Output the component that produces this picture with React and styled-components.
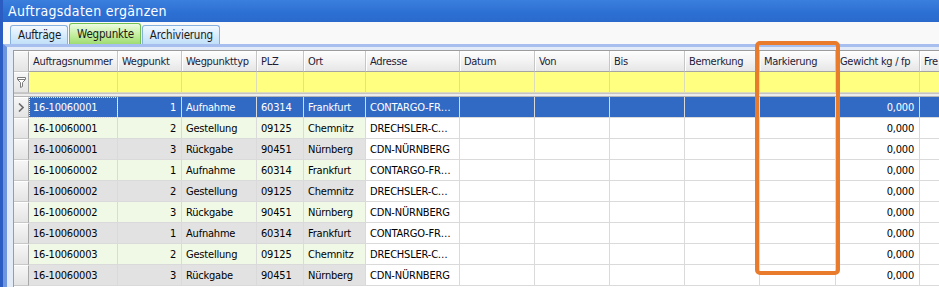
import React from 'react';
import styled, { createGlobalStyle, css } from 'styled-components';

const GlobalStyle = createGlobalStyle`
  html, body {
    margin: 0;
    padding: 0;
    background: #ffffff;
    overflow: hidden;
  }
`;

const columns = [
  { key: 'nr', title: 'Auftragsnummer', width: 89, tinted: true },
  { key: 'wp', title: 'Wegpunkt', width: 64, tinted: true, right: true },
  { key: 'typ', title: 'Wegpunkttyp', width: 75, tinted: true },
  { key: 'plz', title: 'PLZ', width: 47, tinted: true },
  { key: 'ort', title: 'Ort', width: 62, tinted: true },
  { key: 'adr', title: 'Adresse', width: 94 },
  { key: 'datum', title: 'Datum', width: 75 },
  { key: 'von', title: 'Von', width: 75 },
  { key: 'bis', title: 'Bis', width: 75 },
  { key: 'bem', title: 'Bemerkung', width: 75 },
  { key: 'mark', title: 'Markierung', width: 76 },
  { key: 'gew', title: 'Gewicht kg / fp', width: 84, right: true },
  { key: 'fre', title: 'Fre', width: 90 },
];

const stops = [
  ['1', 'Aufnahme', '60314', 'Frankfurt', 'CONTARGO-FR…'],
  ['2', 'Gestellung', '09125', 'Chemnitz', 'DRECHSLER-C…'],
  ['3', 'Rückgabe', '90451', 'Nürnberg', 'CDN-NÜRNBERG'],
];

const rows = ['16-10060001', '16-10060002', '16-10060003'].flatMap((nr) =>
  stops.map(([wp, typ, plz, ort, adr]) => ({
    nr, wp, typ, plz, ort, adr,
    datum: '', von: '', bis: '', bem: '', mark: '', gew: '0,000', fre: '',
  }))
);

const tabs = [
  { label: 'Aufträge', active: false },
  { label: 'Wegpunkte', active: true },
  { label: 'Archivierung', active: false },
];

const App = () => (
  <Frame>
    <GlobalStyle />
    <Window>
      <TitleBar>Auftragsdaten ergänzen</TitleBar>
      <TabStrip>
        {tabs.map((t) => (
          <Tab key={t.label} $active={t.active}>{t.label}</Tab>
        ))}
      </TabStrip>
      <Panel>
        <Grid>
          <HeaderRow>
            <SelectorCell $header />
            {columns.map((c) => (
              <HeaderCell key={c.key} $width={c.width}>{c.title}</HeaderCell>
            ))}
          </HeaderRow>
          <FilterRow>
            <SelectorCell>
              <svg width="9" height="11" viewBox="0 0 9 11">
                <path d="M0.5 0.5 H8.5 V2.5 L5.5 5.5 V9.5 L3.5 10.5 V5.5 L0.5 2.5 Z" fill="#ffffff" stroke="#7a7a7a" />
                <path d="M1 2.5 H8" stroke="#7a7a7a" />
              </svg>
            </SelectorCell>
            {columns.map((c) => (
              <FilterCell key={c.key} $width={c.width} />
            ))}
          </FilterRow>
          <Separator />
          {rows.map((r, i) => {
            const selected = i === 0;
            const tone = i % 2 === 1 ? 'green' : 'gray';
            return (
              <DataRow key={i}>
                <SelectorCell>
                  {selected && (
                    <svg width="6" height="9" viewBox="0 0 6 9">
                      <path d="M1 0.5 L5 4.5 L1 8.5" fill="none" stroke="#6a6a6a" strokeWidth="1.6" />
                    </svg>
                  )}
                </SelectorCell>
                {columns.map((c, ci) => (
                  <DataCell
                    key={c.key}
                    $width={c.width}
                    $right={c.right}
                    $tone={selected ? 'selected' : c.tinted ? tone : 'white'}
                    $focus={selected && ci === 0}
                  >
                    {r[c.key]}
                  </DataCell>
                ))}
              </DataRow>
            );
          })}
        </Grid>
      </Panel>
    </Window>
    <Highlight />
  </Frame>
);

export default App;

const uiFont = `"DejaVu Sans Condensed", "DejaVu Sans", sans-serif`;

const Frame = styled.div`
  position: relative;
  width: 939px;
  height: 287px;
  overflow: hidden;
`;

const Window = styled.div`
  display: flex;
  flex-direction: column;
  height: 100%;
  border-left: 3px solid #2a5cc2;
  background: #f8f8f8;
  font-family: ${uiFont};
`;

const TitleBar = styled.div`
  height: 22px;
  flex: none;
  display: flex;
  align-items: center;
  padding-left: 5px;
  background: linear-gradient(#3b7fdd, #2c6fd3 60%, #2a6acc);
  color: #ffffff;
  font-size: 14px;
  letter-spacing: 0.3px;
`;

const TabStrip = styled.div`
  height: 22px;
  flex: none;
  display: flex;
  align-items: flex-end;
  padding-left: 7px;
  background: #f9f9f9;
`;

const Tab = styled.div`
  box-sizing: border-box;
  height: 19px;
  display: flex;
  align-items: center;
  padding: 0 6px 0 7px;
  margin-right: 1px;
  border: 1px solid #86b0de;
  border-bottom: none;
  border-radius: 3px 3px 0 0;
  background: linear-gradient(#f2f9ff, #d6ebfb 55%, #c1e0f8);
  color: #1a1a1a;
  font-size: 11.5px;
  letter-spacing: -0.2px;
  ${(p) =>
    p.$active &&
    css`
      height: 21px;
      border-color: #6fc04e;
      background: linear-gradient(#ecfce0, #c4ee9f 55%, #9fdc72);
    `}
`;

const Panel = styled.div`
  flex: 1;
  border-top: 3px solid #a6bfee;
  border-left: 4px solid #6e95de;
  padding: 3px 0 0 6px;
  background: #e4ebf8;
  overflow: hidden;
`;

const Grid = styled.div`
  border-top: 1px solid #9c9c9c;
  border-left: 1px solid #9c9c9c;
  background: #ffffff;
  height: 100%;
`;

const rowBase = css`
  display: flex;
  height: 21px;
  white-space: nowrap;
`;

const HeaderRow = styled.div`
  ${rowBase}
`;

const FilterRow = styled.div`
  ${rowBase}
  background: #ffff80;
`;

const DataRow = styled.div`
  ${rowBase}
`;

const Separator = styled.div`
  height: 2px;
  border-top: 1px solid #c4c4c4;
  border-bottom: 1px solid #b4b4b4;
  background: #ececec;
`;

const SelectorCell = styled.div`
  box-sizing: border-box;
  flex: none;
  width: 15px;
  display: flex;
  align-items: center;
  justify-content: center;
  border-right: 1px solid #a8a8a8;
  border-bottom: 1px solid #c8c8c8;
  border-top: 1px solid #ffffff;
  background: linear-gradient(#f6f6f6, #e4e4e4);
`;

const HeaderCell = styled.div`
  box-sizing: border-box;
  flex: none;
  width: ${(p) => p.$width}px;
  display: flex;
  align-items: center;
  padding-left: 4px;
  border-right: 1px solid #c6c6c6;
  border-bottom: 1px solid #a4a4a4;
  box-shadow: inset 1px 1px 0 #ffffff;
  background: linear-gradient(#fdfdfd, #f3f3f3 50%, #e6e6e6);
  color: #1c1c38;
  font-size: 11px;
  letter-spacing: -0.3px;
  overflow: hidden;
`;

const FilterCell = styled.div`
  box-sizing: border-box;
  flex: none;
  width: ${(p) => p.$width}px;
  border-right: 1px solid #dcdcb8;
  border-bottom: 1px solid #dcdcb8;
`;

const tones = {
  selected: css`
    background: #316ac5;
    color: #ffffff;
  `,
  green: css`
    background: #f0f8e6;
    color: #000000;
  `,
  gray: css`
    background: #e2e2e2;
    color: #000000;
  `,
  white: css`
    background: #ffffff;
    color: #000000;
  `,
};

const DataCell = styled.div`
  box-sizing: border-box;
  flex: none;
  width: ${(p) => p.$width}px;
  display: flex;
  align-items: center;
  justify-content: ${(p) => (p.$right ? 'flex-end' : 'flex-start')};
  padding: 0 5px 0 4px;
  border-right: 1px solid #dadada;
  border-bottom: 1px solid #dadada;
  font-size: 11px;
  letter-spacing: -0.2px;
  overflow: hidden;
  text-overflow: ellipsis;
  ${(p) => tones[p.$tone]}
  ${(p) =>
    p.$focus &&
    css`
      outline: 1px dotted #f0f0c0;
      outline-offset: -1px;
    `}
`;

const Highlight = styled.div`
  position: absolute;
  left: 755px;
  top: 41px;
  width: 85px;
  height: 234px;
  box-sizing: border-box;
  border: 4.5px solid #e87b2c;
  border-radius: 5px;
  pointer-events: none;
`;
